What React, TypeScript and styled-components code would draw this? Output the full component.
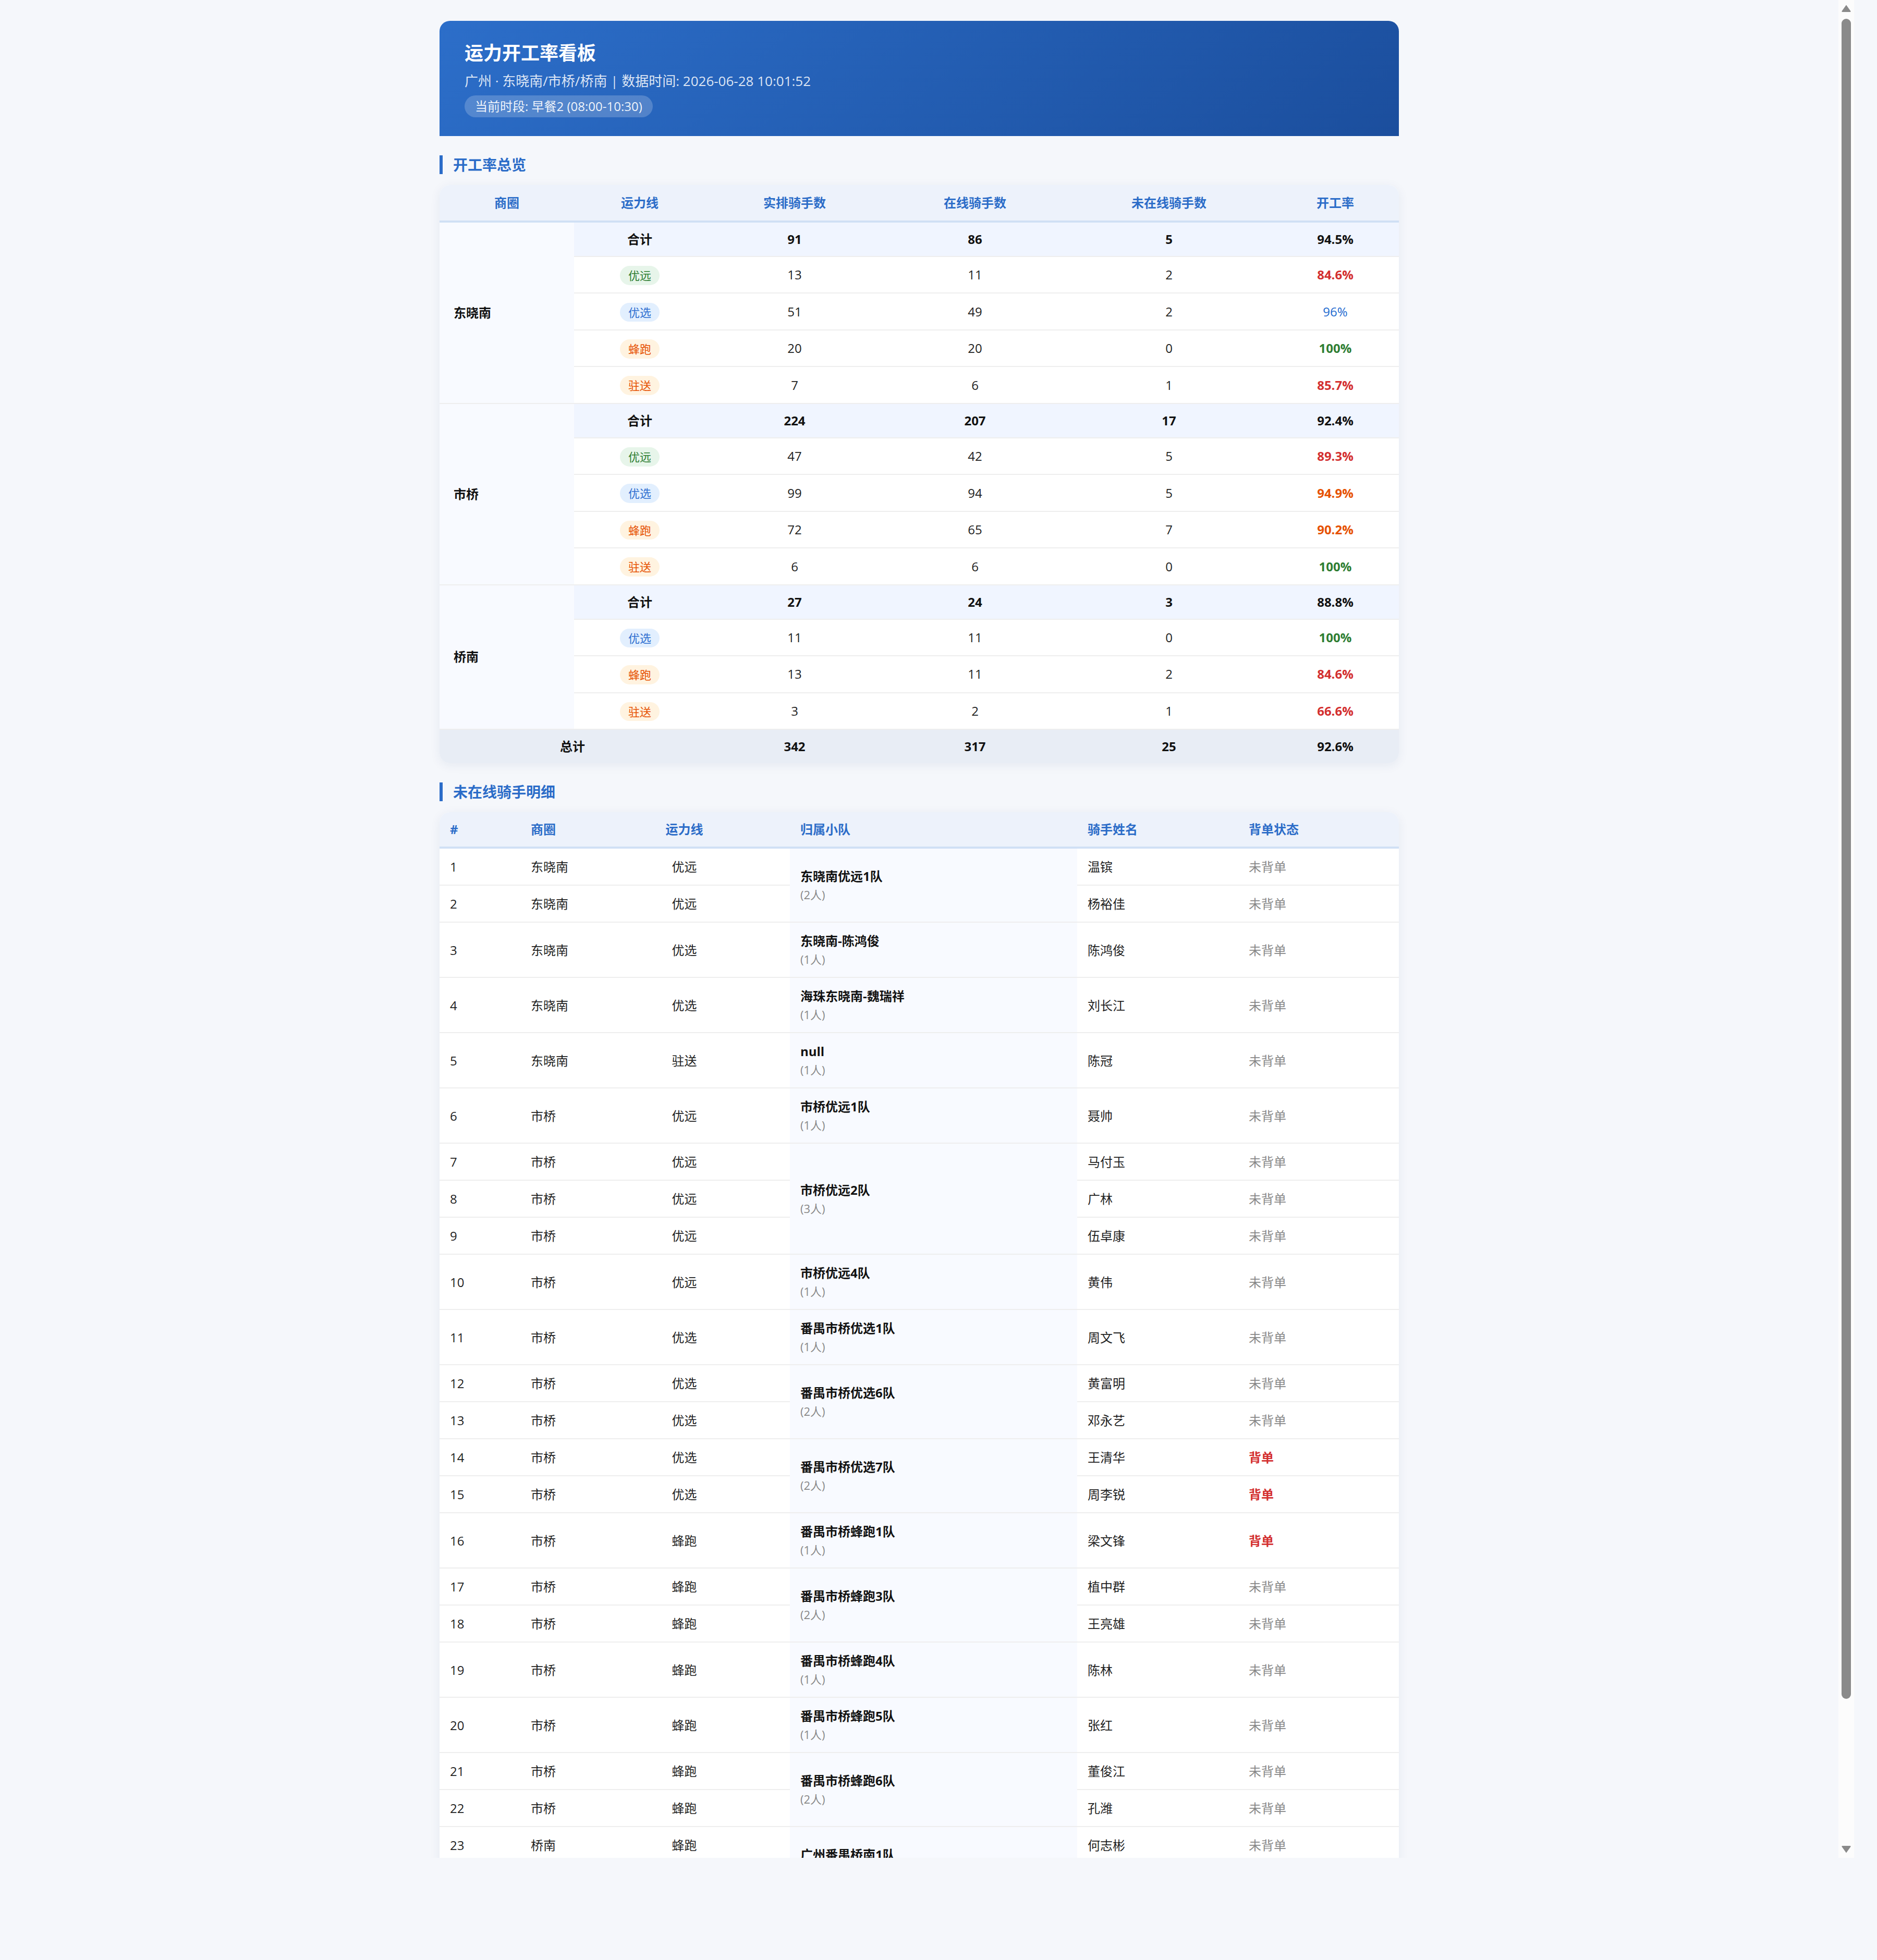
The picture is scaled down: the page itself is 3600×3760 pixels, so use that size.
import React from 'react';
import styled, { createGlobalStyle, css } from 'styled-components';

const GlobalStyle = createGlobalStyle`
  html, body {
    margin: 0;
    padding: 0;
    background: #f5f7fb;
  }
  body {
    font-family: "Open Sans", "Noto Sans CJK SC", sans-serif;
    color: #222;
  }
  * { box-sizing: border-box; }
`;

/* ---------- window frame with its scroll bar ---------- */

const Viewport = styled.div`
  zoom: 2;
  display: flex;
  width: 1778px;
  height: 1782px;
  background: #f5f7fb;
`;

const ScrollArea = styled.div`
  flex: 1;
  min-width: 0;
  overflow: hidden;
`;

const ScrollBar = styled.div`
  width: 15px;
  flex: none;
  display: flex;
  flex-direction: column;
  background: #fcfcfc;
`;

const ScrollButton = styled.div<{ $dir: 'up' | 'down' }>`
  height: 15px;
  flex: none;
  display: flex;
  justify-content: center;
  align-items: ${(p) => (p.$dir === 'up' ? 'flex-end' : 'flex-start')};
  padding: ${(p) => (p.$dir === 'up' ? '0 0 3.5px' : '3.5px 0 0')};
`;

const ScrollTrack = styled.div`
  flex: 1;
  padding: 3px 3px 0;
`;

const ScrollThumb = styled.div<{ $h: number }>`
  height: ${(p) => p.$h}px;
  border-radius: 4.5px;
  background: #8a8a8a;
`;

function Arrow({ dir }: { dir: 'up' | 'down' }) {
  return (
    <svg width="9" height="7" viewBox="0 0 9 7">
      <path
        d="M4.5 0.3 L8.7 6.1 Q9.1 7 8.1 7 L0.9 7 Q-0.1 7 0.3 6.1 Z"
        fill="#8a8a8a"
        transform={dir === 'down' ? 'rotate(180 4.5 3.5)' : undefined}
      />
    </svg>
  );
}

/* ---------- page ---------- */

const Page = styled.main`
  max-width: 920px;
  margin: 0 auto;
  padding: 20px 0 60px;
`;

const Header = styled.header`
  background: linear-gradient(135deg, #2c6ec9 0%, #1b4e9d 100%);
  border-radius: 10px 10px 0 0;
  padding: 18px 24px;
  color: #fff;
`;

const Title = styled.h1`
  margin: 0 0 4px;
  font-size: 18px;
  line-height: 26px;
  font-weight: 700;
`;

const Subtitle = styled.div`
  font-size: 13px;
  line-height: 19.5px;
  color: rgba(255, 255, 255, 0.85);
`;

const BadgeRow = styled.div`
  display: flex;
  margin-top: 4px;
`;

const PeriodBadge = styled.span`
  padding: 2px 10px;
  border-radius: 11px;
  background: rgba(255, 255, 255, 0.2);
  font-size: 12px;
  line-height: 17px;
  color: rgba(255, 255, 255, 0.92);
`;

const SectionTitle = styled.h2`
  margin: 18.5px 0 10.5px;
  padding-left: 10px;
  border-left: 3px solid #2b6cc8;
  font-size: 14px;
  line-height: 18px;
  font-weight: 700;
  color: #2b6cc8;
`;

const Card = styled.section`
  background: #fff;
  border-radius: 10px;
  box-shadow: 0 2px 10px rgba(30, 60, 120, 0.07);
  overflow: hidden;
`;

const Table = styled.table`
  width: 100%;
  border-collapse: collapse;
  table-layout: fixed;
  font-size: 12px;
`;

const Col = styled.col<{ $w: number }>`
  width: ${(p) => p.$w}px;
`;

/* ---------- overview table ---------- */

const OvTh = styled.th`
  padding: 8px 12px;
  line-height: 18px;
  background: #edf2fb;
  color: #2b6cc8;
  font-weight: 700;
  text-align: center;
  border-bottom: 2px solid #d0e0f5;
`;

type RowKind = 'sum' | 'line' | 'total';

const OvRow = styled.tr<{ $kind: RowKind }>`
  background: ${(p) => (p.$kind === 'sum' ? '#f0f5ff' : p.$kind === 'total' ? '#e8edf5' : '#fff')};
  font-weight: ${(p) => (p.$kind === 'line' ? 400 : 700)};
  color: ${(p) => (p.$kind === 'line' ? '#222' : '#111')};
`;

const OvTd = styled.td<{ $kind: RowKind }>`
  padding: ${(p) => (p.$kind === 'line' ? '7.4px 12px' : '7px 12px')};
  line-height: 18px;
  text-align: center;
  vertical-align: middle;
  border-bottom: ${(p) => (p.$kind === 'total' ? 'none' : '1px solid #eeeeee')};
`;

const AreaCell = styled.td`
  padding: 8px 12px 8px 13.5px;
  line-height: 18px;
  background: #f8faff;
  font-weight: 700;
  color: #111;
  text-align: left;
  vertical-align: middle;
  border-bottom: 1px solid #eeeeee;
`;

type LineKind = '优远' | '优选' | '蜂跑' | '驻送';

const tagColors: Record<LineKind, { bg: string; fg: string }> = {
  优远: { bg: '#e7f5ea', fg: '#2e7d32' },
  优选: { bg: '#e2effe', fg: '#2f6fd0' },
  蜂跑: { bg: '#fff3e0', fg: '#e65100' },
  驻送: { bg: '#fff3e0', fg: '#e65100' },
};

const LineTag = styled.span<{ $kind: LineKind }>`
  display: inline-block;
  vertical-align: middle;
  padding: 1px 8px;
  border-radius: 10px;
  font-size: 11px;
  line-height: 16.3px;
  background: ${(p) => tagColors[p.$kind].bg};
  color: ${(p) => tagColors[p.$kind].fg};
`;

type Tone = 'plain' | 'green' | 'blue' | 'orange' | 'red';

const Rate = styled.span<{ $tone: Tone }>`
  ${(p) =>
    p.$tone === 'plain'
      ? css`
          color: inherit;
        `
      : p.$tone === 'blue'
      ? css`
          color: #1f6bd0;
          font-weight: 400;
        `
      : css`
          font-weight: 700;
          color: ${p.$tone === 'green' ? '#2e7d32' : p.$tone === 'orange' ? '#e65100' : '#d32f2f'};
        `}
`;

/* ---------- detail table ---------- */

const DtTh = styled.th<{ $center?: boolean }>`
  padding: 8px 10px;
  line-height: 17px;
  background: #edf2fb;
  color: #2b6cc8;
  font-weight: 700;
  text-align: ${(p) => (p.$center ? 'center' : 'left')};
  border-bottom: 2px solid #d0e0f5;
`;

const DtTd = styled.td<{ $center?: boolean }>`
  padding: 8px 10px;
  line-height: 18.5px;
  text-align: ${(p) => (p.$center ? 'center' : 'left')};
  vertical-align: middle;
  color: #1f1f1f;
  border-bottom: 1px solid #eeeeee;
  white-space: nowrap;
`;

const TeamCell = styled.td`
  padding: 8px 10px;
  background: #f8faff;
  vertical-align: middle;
  border-bottom: 1px solid #eeeeee;
`;

const TeamName = styled.div`
  font-weight: 700;
  line-height: 18.5px;
  color: #111;
`;

const TeamCount = styled.div`
  font-size: 11px;
  line-height: 17.5px;
  color: #888;
`;

const Status = styled.span<{ $on: boolean }>`
  color: ${(p) => (p.$on ? '#d32f2f' : '#888')};
  font-weight: ${(p) => (p.$on ? 700 : 400)};
`;

/* ---------- data ---------- */

type LineStat = { line: LineKind; plan: number; online: number; offline: number; rate: string; tone: Tone };
type AreaStat = { area: string; plan: number; online: number; offline: number; rate: string; lines: LineStat[] };

const overview: AreaStat[] = [
  {
    area: '东晓南',
    plan: 91,
    online: 86,
    offline: 5,
    rate: '94.5%',
    lines: [
      { line: '优远', plan: 13, online: 11, offline: 2, rate: '84.6%', tone: 'red' },
      { line: '优选', plan: 51, online: 49, offline: 2, rate: '96%', tone: 'blue' },
      { line: '蜂跑', plan: 20, online: 20, offline: 0, rate: '100%', tone: 'green' },
      { line: '驻送', plan: 7, online: 6, offline: 1, rate: '85.7%', tone: 'red' },
    ],
  },
  {
    area: '市桥',
    plan: 224,
    online: 207,
    offline: 17,
    rate: '92.4%',
    lines: [
      { line: '优远', plan: 47, online: 42, offline: 5, rate: '89.3%', tone: 'red' },
      { line: '优选', plan: 99, online: 94, offline: 5, rate: '94.9%', tone: 'orange' },
      { line: '蜂跑', plan: 72, online: 65, offline: 7, rate: '90.2%', tone: 'orange' },
      { line: '驻送', plan: 6, online: 6, offline: 0, rate: '100%', tone: 'green' },
    ],
  },
  {
    area: '桥南',
    plan: 27,
    online: 24,
    offline: 3,
    rate: '88.8%',
    lines: [
      { line: '优选', plan: 11, online: 11, offline: 0, rate: '100%', tone: 'green' },
      { line: '蜂跑', plan: 13, online: 11, offline: 2, rate: '84.6%', tone: 'red' },
      { line: '驻送', plan: 3, online: 2, offline: 1, rate: '66.6%', tone: 'red' },
    ],
  },
];

type Rider = { area: string; line: LineKind; name: string; taken?: boolean };
type Team = { team: string; riders: Rider[] };

const teams: Team[] = [
  {
    team: '东晓南优远1队',
    riders: [
      { area: '东晓南', line: '优远', name: '温镔' },
      { area: '东晓南', line: '优远', name: '杨裕佳' },
    ],
  },
  { team: '东晓南-陈鸿俊', riders: [{ area: '东晓南', line: '优选', name: '陈鸿俊' }] },
  { team: '海珠东晓南-魏瑞祥', riders: [{ area: '东晓南', line: '优选', name: '刘长江' }] },
  { team: 'null', riders: [{ area: '东晓南', line: '驻送', name: '陈冠' }] },
  { team: '市桥优远1队', riders: [{ area: '市桥', line: '优远', name: '聂帅' }] },
  {
    team: '市桥优远2队',
    riders: [
      { area: '市桥', line: '优远', name: '马付玉' },
      { area: '市桥', line: '优远', name: '广林' },
      { area: '市桥', line: '优远', name: '伍卓康' },
    ],
  },
  { team: '市桥优远4队', riders: [{ area: '市桥', line: '优远', name: '黄伟' }] },
  { team: '番禺市桥优选1队', riders: [{ area: '市桥', line: '优选', name: '周文飞' }] },
  {
    team: '番禺市桥优选6队',
    riders: [
      { area: '市桥', line: '优选', name: '黄富明' },
      { area: '市桥', line: '优选', name: '邓永艺' },
    ],
  },
  {
    team: '番禺市桥优选7队',
    riders: [
      { area: '市桥', line: '优选', name: '王清华', taken: true },
      { area: '市桥', line: '优选', name: '周李锐', taken: true },
    ],
  },
  { team: '番禺市桥蜂跑1队', riders: [{ area: '市桥', line: '蜂跑', name: '梁文锋', taken: true }] },
  {
    team: '番禺市桥蜂跑3队',
    riders: [
      { area: '市桥', line: '蜂跑', name: '植中群' },
      { area: '市桥', line: '蜂跑', name: '王亮雄' },
    ],
  },
  { team: '番禺市桥蜂跑4队', riders: [{ area: '市桥', line: '蜂跑', name: '陈林' }] },
  { team: '番禺市桥蜂跑5队', riders: [{ area: '市桥', line: '蜂跑', name: '张红' }] },
  {
    team: '番禺市桥蜂跑6队',
    riders: [
      { area: '市桥', line: '蜂跑', name: '董俊江' },
      { area: '市桥', line: '蜂跑', name: '孔潍' },
    ],
  },
  {
    team: '广州番禺桥南1队',
    riders: [
      { area: '桥南', line: '蜂跑', name: '何志彬' },
      { area: '桥南', line: '蜂跑', name: '罗建新' },
    ],
  },
  { team: '桥南驻送1队', riders: [{ area: '桥南', line: '驻送', name: '谢伟强' }] },
];

function OverviewTable() {
  return (
    <Card>
      <Table>
        <colgroup>
          <Col $w={129} />
          <Col $w={126} />
          <Col $w={171} />
          <Col $w={175} />
          <Col $w={197} />
          <Col $w={122} />
        </colgroup>
        <thead>
          <tr>
            <OvTh>商圈</OvTh>
            <OvTh>运力线</OvTh>
            <OvTh>实排骑手数</OvTh>
            <OvTh>在线骑手数</OvTh>
            <OvTh>未在线骑手数</OvTh>
            <OvTh>开工率</OvTh>
          </tr>
        </thead>
        <tbody>
          {overview.map((a) => (
            <React.Fragment key={a.area}>
              <OvRow $kind="sum">
                <AreaCell rowSpan={a.lines.length + 1}>{a.area}</AreaCell>
                <OvTd $kind="sum">合计</OvTd>
                <OvTd $kind="sum">{a.plan}</OvTd>
                <OvTd $kind="sum">{a.online}</OvTd>
                <OvTd $kind="sum">{a.offline}</OvTd>
                <OvTd $kind="sum">{a.rate}</OvTd>
              </OvRow>
              {a.lines.map((l) => (
                <OvRow $kind="line" key={l.line}>
                  <OvTd $kind="line">
                    <LineTag $kind={l.line}>{l.line}</LineTag>
                  </OvTd>
                  <OvTd $kind="line">{l.plan}</OvTd>
                  <OvTd $kind="line">{l.online}</OvTd>
                  <OvTd $kind="line">{l.offline}</OvTd>
                  <OvTd $kind="line">
                    <Rate $tone={l.tone}>{l.rate}</Rate>
                  </OvTd>
                </OvRow>
              ))}
            </React.Fragment>
          ))}
          <OvRow $kind="total">
            <OvTd $kind="total" colSpan={2}>
              总计
            </OvTd>
            <OvTd $kind="total">342</OvTd>
            <OvTd $kind="total">317</OvTd>
            <OvTd $kind="total">25</OvTd>
            <OvTd $kind="total">92.6%</OvTd>
          </OvRow>
        </tbody>
      </Table>
    </Card>
  );
}

function DetailTable() {
  let n = 0;
  return (
    <Card>
      <Table>
        <colgroup>
          <Col $w={77.5} />
          <Col $w={56} />
          <Col $w={202.5} />
          <Col $w={275.5} />
          <Col $w={154.5} />
          <Col $w={154} />
        </colgroup>
        <thead>
          <tr>
            <DtTh>#</DtTh>
            <DtTh>商圈</DtTh>
            <DtTh $center>运力线</DtTh>
            <DtTh>归属小队</DtTh>
            <DtTh>骑手姓名</DtTh>
            <DtTh>背单状态</DtTh>
          </tr>
        </thead>
        <tbody>
          {teams.map((t) =>
            t.riders.map((r, i) => {
              n += 1;
              return (
                <tr key={n}>
                  <DtTd>{n}</DtTd>
                  <DtTd>{r.area}</DtTd>
                  <DtTd $center>{r.line}</DtTd>
                  {i === 0 && (
                    <TeamCell rowSpan={t.riders.length}>
                      <TeamName>{t.team}</TeamName>
                      <TeamCount>({t.riders.length}人)</TeamCount>
                    </TeamCell>
                  )}
                  <DtTd>{r.name}</DtTd>
                  <DtTd>
                    <Status $on={!!r.taken}>{r.taken ? '背单' : '未背单'}</Status>
                  </DtTd>
                </tr>
              );
            })
          )}
        </tbody>
      </Table>
    </Card>
  );
}

export default function App() {
  return (
    <>
      <GlobalStyle />
      <Viewport>
        <ScrollArea>
          <Page>
            <Header>
              <Title>运力开工率看板</Title>
              <Subtitle>广州 · 东晓南/市桥/桥南 | 数据时间: 2026-06-28 10:01:52</Subtitle>
              <BadgeRow>
                <PeriodBadge>当前时段: 早餐2 (08:00-10:30)</PeriodBadge>
              </BadgeRow>
            </Header>
            <SectionTitle>开工率总览</SectionTitle>
            <OverviewTable />
            <SectionTitle>未在线骑手明细</SectionTitle>
            <DetailTable />
          </Page>
        </ScrollArea>
        <ScrollBar>
          <ScrollButton $dir="up">
            <Arrow dir="up" />
          </ScrollButton>
          <ScrollTrack>
            <ScrollThumb $h={1611.5} />
          </ScrollTrack>
          <ScrollButton $dir="down">
            <Arrow dir="down" />
          </ScrollButton>
        </ScrollBar>
      </Viewport>
    </>
  );
}
